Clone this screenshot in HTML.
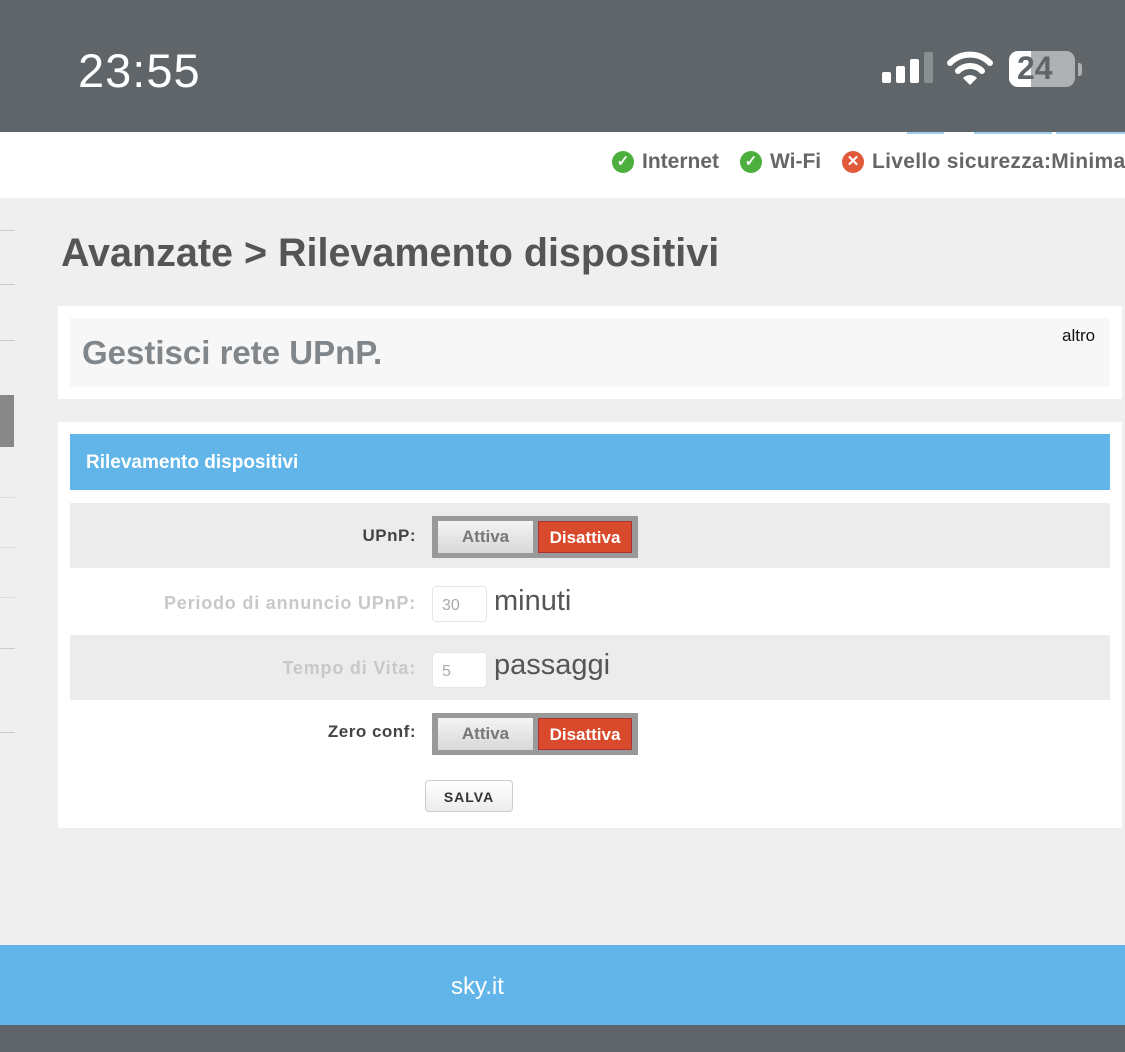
<!DOCTYPE html>
<html><head><meta charset="utf-8"><style>
*{margin:0;padding:0;box-sizing:border-box}
body{width:1125px;height:1052px;overflow:hidden;background:#efefef;font-family:"Liberation Sans",Arial,sans-serif;position:relative}
.abs{position:absolute}
.sb{left:0;top:0;width:1125px;height:132px;background:#5f6568}
.time{left:78px;top:43px;color:#fff;font-size:47px;font-weight:500;letter-spacing:1px}
.hdr{left:0;top:132px;width:1125px;height:66px;background:#fff}
.st{top:150px;font-size:21px;font-weight:bold;color:#666;white-space:nowrap}
.ic{width:22px;height:22px;border-radius:50%;color:#fff;font-size:15px;text-align:center;line-height:22px;font-weight:bold}
.h1{left:61px;top:231px;font-size:39.5px;font-weight:bold;color:#555;white-space:nowrap}
.card{background:#fff;left:58px;width:1064px}
.row{left:70px;width:1040px;height:65px}
.lbl{right:709px;font-size:17px;font-weight:bold;text-align:right;white-space:nowrap;letter-spacing:0.5px}
.tg{left:432px;width:206px;height:42px;background:#999;padding:5px 6px}
.tg .a{position:absolute;left:6px;top:5px;width:95px;height:32px;background:linear-gradient(#f4f4f4,#d8d8d8);color:#777;font-size:17px;font-weight:bold;text-align:center;line-height:32px}
.tg .d{position:absolute;left:106px;top:5px;width:94px;height:32px;background:#d9492b;color:#fff;font-size:17px;font-weight:bold;text-align:center;line-height:32px;border:1px solid #a33}
.inp{left:432px;width:55px;height:36px;border:1px solid #e6e6e6;border-radius:4px;background:#fff;color:#aaa;font-size:16px;padding:10px 0 0 9px}
.unit{left:494px;font-size:29px;color:#555}
.side{left:0;width:15px;height:1px;background:#ccc}
</style></head><body>
<div class="abs sb"></div>
<div class="abs time">23:55</div>
<div class="abs" style="left:882px;top:72px;width:9px;height:11px;background:#fff;border-radius:2px"></div>
<div class="abs" style="left:896px;top:66px;width:9px;height:17px;background:#fff;border-radius:2px"></div>
<div class="abs" style="left:910px;top:59px;width:9px;height:24px;background:#fff;border-radius:2px"></div>
<div class="abs" style="left:924px;top:52px;width:9px;height:31px;background:#8a8f92;border-radius:2px"></div>
<svg class="abs" style="left:947px;top:50px" width="46" height="36" viewBox="0 0 46 36"><path d="M3 13 A28 28 0 0 1 43 13" stroke="#fff" stroke-width="6" fill="none" stroke-linecap="round"/><path d="M11 21 A17 17 0 0 1 35 21" stroke="#fff" stroke-width="6" fill="none" stroke-linecap="round"/><path d="M16 28 L23 35 L30 28 A10 10 0 0 0 16 28Z" fill="#fff"/></svg>
<div class="abs" style="left:1009px;top:51px;width:66px;height:36px;border-radius:9px;background:linear-gradient(90deg,#fff 0 22px,#aeb1b3 22px)"></div>
<div class="abs" style="left:1078px;top:63px;width:4px;height:13px;background:#aeb1b3;border-radius:0 3px 3px 0"></div>
<div class="abs" style="left:1017px;top:50px;font-size:32px;font-weight:bold;color:#5f6568">24</div>
<div class="abs hdr"></div>
<div class="abs" style="left:907px;top:132px;width:37px;height:2px;background:#9cd0ef"></div>
<div class="abs" style="left:974px;top:132px;width:78px;height:2px;background:#9cd0ef"></div>
<div class="abs" style="left:1056px;top:132px;width:69px;height:2px;background:#9cd0ef"></div>
<div class="abs ic" style="left:612px;top:151px;background:#4caf3e">✓</div>
<div class="abs st" style="left:642px">Internet</div>
<div class="abs ic" style="left:740px;top:151px;background:#4caf3e">✓</div>
<div class="abs st" style="left:770px">Wi-Fi</div>
<div class="abs ic" style="left:842px;top:151px;background:#e05a3a">✕</div>
<div class="abs st" style="left:872px;letter-spacing:0.3px">Livello sicurezza:Minima</div>
<div class="abs side" style="top:230px"></div><div class="abs side" style="top:284px"></div><div class="abs side" style="top:340px"></div>
<div class="abs" style="left:0;top:395px;width:14px;height:52px;background:#888"></div>
<div class="abs side" style="top:497px;background:#ddd"></div><div class="abs side" style="top:547px;background:#ddd"></div><div class="abs side" style="top:597px;background:#ddd"></div>
<div class="abs side" style="top:648px"></div><div class="abs side" style="top:732px"></div>
<div class="abs h1">Avanzate &gt; Rilevamento dispositivi</div>
<div class="abs card" style="top:306px;height:93px"></div>
<div class="abs" style="left:70px;top:318px;width:1040px;height:69px;background:#f7f7f7"></div>
<div class="abs" style="left:82px;top:334px;font-size:33px;font-weight:bold;color:#80868a">Gestisci rete UPnP.</div>
<div class="abs" style="left:1062px;top:326px;font-size:17px;color:#111">altro</div>
<div class="abs card" style="top:422px;height:406px"></div>
<div class="abs" style="left:70px;top:434px;width:1040px;height:56px;background:#62b5e8"></div>
<div class="abs" style="left:86px;top:452px;font-size:19px;font-weight:bold;color:#fff">Rilevamento dispositivi</div>
<div class="abs row" style="top:503px;background:#ececec"></div>
<div class="abs row" style="top:635px;background:#ececec"></div>
<div class="abs lbl" style="top:526px;color:#444">UPnP:</div>
<div class="abs tg" style="top:516px"><div class="a">Attiva</div><div class="d">Disattiva</div></div>
<div class="abs lbl" style="top:593px;color:#c8c8c8;font-size:18px;letter-spacing:0.8px">Periodo di annuncio UPnP:</div>
<div class="abs inp" style="top:586px">30</div><div class="abs unit" style="top:585px">minuti</div>
<div class="abs lbl" style="top:658px;color:#c8c8c8;font-size:18px;letter-spacing:0.8px">Tempo di Vita:</div>
<div class="abs inp" style="top:652px">5</div><div class="abs unit" style="top:649px">passaggi</div>
<div class="abs lbl" style="top:722px;color:#444">Zero conf:</div>
<div class="abs tg" style="top:713px"><div class="a">Attiva</div><div class="d">Disattiva</div></div>
<div class="abs" style="left:425px;top:780px;width:88px;height:32px;border:1px solid #ccc;border-radius:4px;background:linear-gradient(#fff,#ececec);font-size:14px;font-weight:bold;color:#333;text-align:center;line-height:32px;letter-spacing:1px">SALVA</div>
<div class="abs" style="left:0;top:945px;width:1125px;height:80px;background:#62b5e8"></div>
<div class="abs" style="left:451px;top:973px;font-size:24px;color:#fff">sky.it</div>
<div class="abs" style="left:0;top:1025px;width:1125px;height:27px;background:#5f6568"></div>
</body></html>
